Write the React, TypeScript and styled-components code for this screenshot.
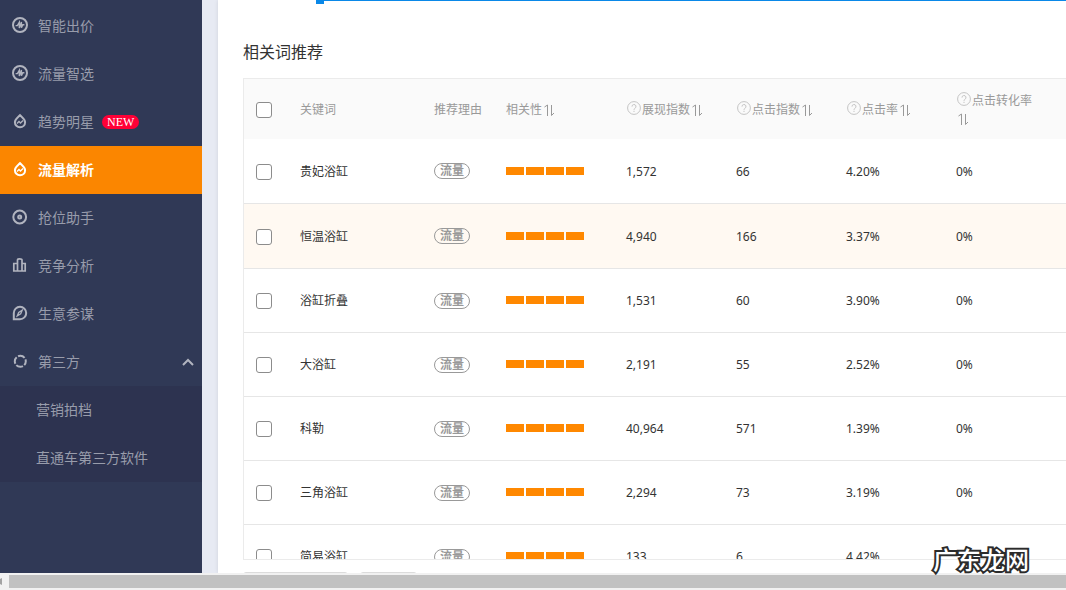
import React from "react";
import styled, { createGlobalStyle } from "styled-components";

const GlobalStyle = createGlobalStyle`
  * { box-sizing: border-box; }
  html, body { margin: 0; overflow: hidden; }
  body {
    font-family: "Noto Sans", "Noto Sans CJK SC", sans-serif;
    font-size: 12px;
    color: #333;
    background: #fff;
  }
`;

const Page = styled.div`
  position: relative;
  display: flex;
  flex-direction: column;
  height: 100vh;
`;

const Body = styled.div`
  display: flex;
  flex: 1;
  min-height: 0;
  overflow: hidden;
  background: #e7eaf3;
`;

const Sidebar = styled.nav`
  flex: none;
  width: 202px;
  padding-top: 2px;
  background: #303956;
`;

const MenuLink = styled.a<{ $active?: boolean }>`
  display: flex;
  align-items: center;
  height: 48px;
  padding: 0 8px 0 12px;
  gap: 10px;
  font-size: 14px;
  line-height: 20px;
  text-decoration: none;
  font-weight: ${(p) => (p.$active ? 700 : 400)};
  color: ${(p) => (p.$active ? "#fff" : "#989cab")};
  background: ${(p) => (p.$active ? "#fb8600" : "transparent")};
`;

const MenuIcon = styled.svg<{ $active?: boolean }>`
  flex: none;
  width: 16px;
  height: 16px;
  margin-bottom: 2px;
  fill: none;
  stroke: ${(p) => (p.$active ? "#fff" : "#b1b4bf")};
  stroke-width: 2;
`;

const NewTag = styled.span`
  height: 14px;
  margin-left: -2px;
  padding: 0 5px;
  border-radius: 7px;
  background: #ff0036;
  color: #fff;
  font: 400 12px/14px "Liberation Serif", serif;
`;

const Chevron = styled.svg`
  width: 12px;
  height: 8px;
  margin-left: auto;
  fill: none;
  stroke: #b1b4bf;
  stroke-width: 2;
`;

const SubMenu = styled.div`
  background: #2d3350;
`;

const SubLink = styled(MenuLink)`
  padding-left: 36px;
`;

const Main = styled.main`
  flex: 1;
  min-width: 0;
  margin-left: 16px;
  padding-left: 25px;
  background: #fff;
  box-shadow: 0 0 4px rgba(0, 0, 0, 0.1);
`;

const RangeTrack = styled.div`
  height: 4px;
  margin-left: 73px;
  border-left: 8px solid #0a88e8;
`;

const RangeLine = styled.div`
  height: 1px;
  background: #0a88e8;
`;

const Title = styled.h2`
  margin: 36px 0 14px;
  font-size: 16px;
  font-weight: 400;
  line-height: 24px;
`;

const TableBox = styled.div`
  height: 482px;
  overflow: hidden;
  border: 1px solid #ebebeb;
  border-right: 0;
`;

const Table = styled.table`
  width: 100%;
  border-collapse: separate;
  border-spacing: 0;
  table-layout: fixed;
`;

const Col = styled.col<{ $w?: number }>`
  width: ${(p) => (p.$w ? `${p.$w}px` : "auto")};
`;

const HeadCell = styled.th`
  height: 60px;
  padding: 1px 12px 0;
  background: #fafafa;
  color: #999;
  font-weight: 400;
  line-height: 18px;
  text-align: left;
  white-space: nowrap;
`;

const Row = styled.tr<{ $hover?: boolean; $tall?: boolean }>`
  height: ${(p) => (p.$tall ? 65 : 64)}px;
  background: ${(p) => (p.$hover ? "#fff9f2" : "#fff")};
`;

const Cell = styled.td`
  padding: 1px 12px 0;
  border-bottom: 1px solid #e6e6e6;
  line-height: 18px;
`;

const Check = styled.input.attrs({ type: "checkbox" })`
  appearance: none;
  display: block;
  width: 16px;
  height: 16px;
  margin: 0;
  border: 1px solid #8c8c8c;
  border-radius: 3px;
  background: #fff;

  &:checked {
    background: #fb8600;
  }
`;

const Sort = styled.button`
  padding: 0;
  margin-left: 1px;
  border: 0;
  background: none;
  vertical-align: -3px;
  line-height: 0;
`;

const HelpIcon = styled.svg`
  width: 14px;
  height: 14px;
  margin: 0 1px;
  vertical-align: -1px;
  fill: none;
  stroke: #c4c4c4;
`;

const Reason = styled.span`
  display: block;
  width: 36px;
  height: 16px;
  margin-bottom: 1px;
  border: 1px solid #999;
  border-radius: 8px;
  color: #999;
  font-weight: 700;
  line-height: 14px;
  text-align: center;
`;

const Meter = styled.div`
  display: flex;
  gap: 2px;
  margin-bottom: 2px;
`;

const Segment = styled.span`
  width: 18px;
  height: 8px;
  background: #ff8800;
`;

const Actions = styled.div`
  display: flex;
  gap: 12px;
  margin-top: 12px;
`;

const ActionButton = styled.button<{ $w: number }>`
  width: ${(p) => p.$w}px;
  height: 28px;
  border: 1px solid #dcdcdc;
  border-radius: 3px;
  background: #fff;
`;

const ScrollBar = styled.div`
  display: flex;
  align-items: center;
  flex: none;
  height: 17px;
  gap: 7px;
  background: #f1f1f1;
`;

const ScrollArrow = styled.svg`
  width: 2px;
  height: 7px;
  fill: #a3a3a3;
`;

const Thumb = styled.div`
  flex: 1;
  height: 13px;
  background: #c1c1c1;
`;

const Watermark = styled.div`
  position: absolute;
  right: 37px;
  bottom: 16px;
  color: #fff;
  font: 500 24px/30px "Noto Sans CJK SC", sans-serif;
  -webkit-text-stroke: 4px #2b2b2b;
  paint-order: stroke fill;
`;

const icons: Record<string, React.ReactNode> = {
  pulse: (
    <>
      <circle cx="8" cy="8" r="7" />
      <path d="M3.6 8.6H5.4L7.3 5.3V11L9.4 5V10.7L10.8 7.8H12.4" strokeWidth="1.4" />
    </>
  ),
  drop: (
    <>
      <path d="M8 2.200C6.500 4 2.900 5.900 2.900 9.200a5.100 5.100 0 0 0 10.200 0C13.100 5.900 9.500 4 8 2.200z" />
      <path d="M5 10.500l2-2 1.500 1.500 2.500-2.500" strokeWidth="1.4" />
    </>
  ),
  target: (
    <>
      <circle cx="7.7" cy="8" r="6.400" />
      <circle cx="7.7" cy="8" r="1.500" />
    </>
  ),
  bars: <path d="M1.8 14V6.500h3.700V14zM5.500 14V3q0-1.200 2.200-1.200T10 3v11zM10 14V6.500h3.200V14z" strokeWidth="1.7" />,
  compass: (
    <>
      <path d="M1.800 14.200V8a6.200 6.200 0 1 1 6.200 6.200z" />
      <path d="M5.300 10.800l1.400-3.300 3.500-2.300-1.500 3.500z" strokeWidth="1.3" />
    </>
  ),
  ring: <circle cx="8.300" cy="8.300" r="5.500" strokeDasharray="7.1 1.54" strokeDashoffset="3" />,
};

const menu = [
  { label: "智能出价", icon: "pulse" },
  { label: "流量智选", icon: "pulse" },
  { label: "趋势明星", icon: "drop", isNew: true },
  { label: "流量解析", icon: "drop", active: true },
  { label: "抢位助手", icon: "target" },
  { label: "竞争分析", icon: "bars" },
  { label: "生意参谋", icon: "compass" },
  { label: "第三方", icon: "ring", open: true },
];

const rows = [
  ["贵妃浴缸", "1,572", "66", "4.20%", "0%"],
  ["恒温浴缸", "4,940", "166", "3.37%", "0%"],
  ["浴缸折叠", "1,531", "60", "3.90%", "0%"],
  ["大浴缸", "2,191", "55", "2.52%", "0%"],
  ["科勒", "40,964", "571", "1.39%", "0%"],
  ["三角浴缸", "2,294", "73", "3.19%", "0%"],
  ["简易浴缸", "133", "6", "4.42%", ""],
];

const SortButton = ({ label }: { label: string }) => (
  <Sort aria-label={`${label}排序`}>
    <svg width="13" height="14" viewBox="0 0 13 14" fill="none" stroke="#999">
      <path d="M1.500 4L4.500 2V13M8.500 2V12.500L11 10" />
    </svg>
  </Sort>
);

const Help = () => (
  <HelpIcon viewBox="0 0 14 14">
    <circle cx="7" cy="7" r="6.400" />
    <path d="M5 5.600a2 2 0 1 1 2.900 1.700Q7 7.800 7 8.800M7 9.800v1.200" />
  </HelpIcon>
);

export default function App() {
  return (
    <Page>
      <GlobalStyle />
      <Body>
        <Sidebar>
          {menu.map((m) => (
            <MenuLink key={m.label} href="#" $active={m.active}>
              <MenuIcon viewBox="0 0 16 16" $active={m.active}>
                {icons[m.icon]}
              </MenuIcon>
              {m.label}
              {m.isNew && <NewTag>NEW</NewTag>}
              {m.open && (
                <Chevron viewBox="0 0 12 8">
                  <path d="M1 7l5-5 5 5" />
                </Chevron>
              )}
            </MenuLink>
          ))}
          <SubMenu>
            <SubLink href="#">营销拍档</SubLink>
            <SubLink href="#">直通车第三方软件</SubLink>
          </SubMenu>
        </Sidebar>
        <Main>
          <RangeTrack>
            <RangeLine />
          </RangeTrack>
          <Title>相关词推荐</Title>
          <TableBox>
            <Table>
              <colgroup>
                {[44, 134, 72, 120, 110, 110, 110].map((w, i) => (
                  <Col key={i} $w={w} />
                ))}
                <Col />
              </colgroup>
              <thead>
                <tr>
                  <HeadCell>
                    <Check aria-label="全选" />
                  </HeadCell>
                  <HeadCell>关键词</HeadCell>
                  <HeadCell>推荐理由</HeadCell>
                  <HeadCell>
                    相关性
                    <SortButton label="相关性" />
                  </HeadCell>
                  {["展现指数", "点击指数", "点击率"].map((h) => (
                    <HeadCell key={h}>
                      <Help />
                      {h}
                      <SortButton label={h} />
                    </HeadCell>
                  ))}
                  <HeadCell>
                    <Help />
                    点击转化率
                    <br />
                    <SortButton label="点击转化率" />
                  </HeadCell>
                </tr>
              </thead>
              <tbody>
                {rows.map(([word, ...values], i) => (
                  <Row key={word} $hover={i === 1} $tall={i < 2}>
                    <Cell>
                      <Check aria-label={word} />
                    </Cell>
                    <Cell>{word}</Cell>
                    <Cell>
                      <Reason>流量</Reason>
                    </Cell>
                    <Cell>
                      <Meter>
                        <Segment />
                        <Segment />
                        <Segment />
                        <Segment />
                      </Meter>
                    </Cell>
                    {values.map((v, j) => (
                      <Cell key={j}>{v}</Cell>
                    ))}
                  </Row>
                ))}
              </tbody>
            </Table>
          </TableBox>
          <Actions>
            <ActionButton $w={105} />
            <ActionButton $w={57} />
          </Actions>
        </Main>
      </Body>
      <ScrollBar>
        <ScrollArrow viewBox="0 0 2 7">
          <path d="M0 1l2-1v7l-2-1z" />
        </ScrollArrow>
        <Thumb />
      </ScrollBar>
      <Watermark>广东龙网</Watermark>
    </Page>
  );
}
